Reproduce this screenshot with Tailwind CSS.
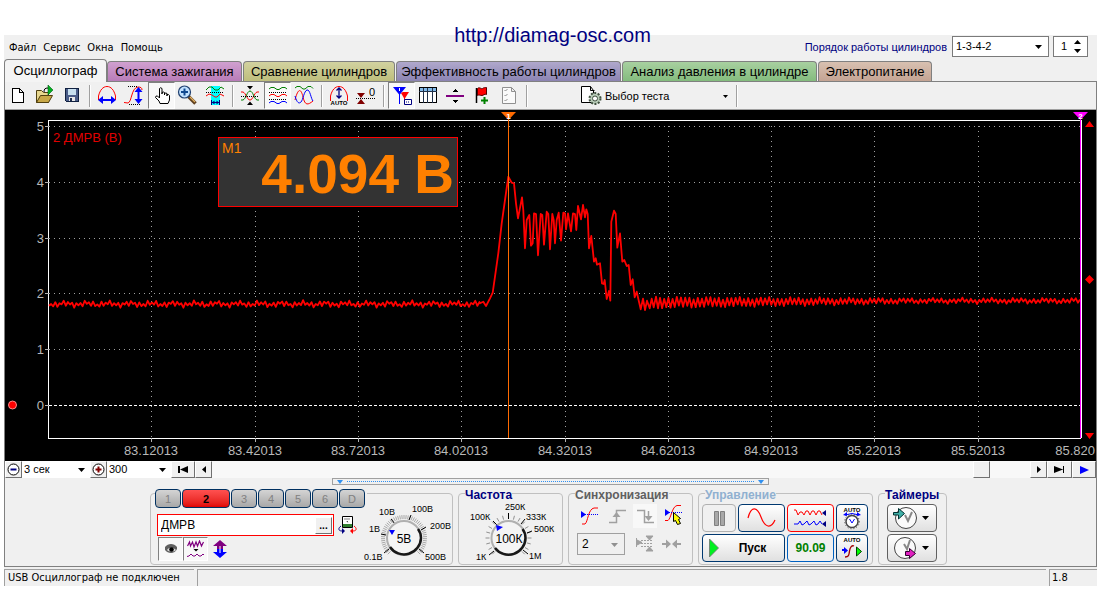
<!DOCTYPE html>
<html lang="ru">
<head>
<meta charset="utf-8">
<title>USB Осциллограф</title>
<meta name="viewport" content="width=device-width, initial-scale=1">
<script src="https://cdn.jsdelivr.net/npm/@tailwindcss/browser@4"></script>
</head>
<body class="bg-white font-['Liberation_Sans',Arial,sans-serif] text-[11px] leading-[14px] text-black">
<div class="relative pt-[35px] pr-3 pl-1">
  <a href="http://diamag-osc.com" class="absolute top-[23px] right-1 left-0 z-10 text-center text-[20px] leading-6 text-[#000080]">http://diamag-osc.com</a>

  <div class="bg-[#f0f0f0]">
    <!-- Menu bar and cylinder order -->
    <header class="flex h-6 items-start justify-between pr-[9px] pl-[5px]">
      <nav class="flex gap-[7px] pt-[6px] font-['DejaVu_Sans_Condensed','DejaVu_Sans',sans-serif] text-[11px]">
        <a href="#file">Файл</a><a href="#service">Сервис</a><a href="#windows">Окна</a><a href="#help">Помощь</a>
      </nav>
      <div class="flex items-center pt-px">
        <label for="order" class="pr-[5px] text-[#000080]">Порядок работы цилиндров</label>
        <span class="relative mr-1 block h-[21px] w-[97px] border border-[#7a7a7a] bg-white">
          <select id="order" class="block h-[18px] w-full appearance-none bg-transparent pl-[3px] outline-none"><option>1-3-4-2</option></select>
          <svg class="pointer-events-none absolute top-2 right-[6px]" width="7" height="4" viewBox="0 0 7 4"><path d="M0 0h7L3.500 4z"/></svg>
        </span>
        <span class="relative block h-[21px] w-[35px] border border-[#7a7a7a] bg-white">
          <input aria-label="Номер цилиндра" value="1" class="block h-[18px] w-5 bg-transparent pl-[7px] outline-none">
          <svg class="pointer-events-none absolute top-[3px] right-[6px]" width="7" height="13" viewBox="0 0 7 13"><path d="M0 4h7L3.500 0zM0 9h7L3.500 13z"/></svg>
        </span>
      </div>
    </header>

    <!-- Section tabs -->
    <div role="tablist" class="flex items-end text-[13px] leading-[19px]">
      <button role="tab" aria-selected="true" class="z-[1] -mb-px h-[23px] w-[103px] rounded-t border border-b-0 border-[#808080] bg-[#f4f4f4] pb-px">Осциллограф</button>
      <button role="tab" class="h-[20px] w-[135px] rounded-t border border-b-0 border-[#808080] bg-linear-to-b from-[#d0a0d0] to-[#b87cb8]">Система зажигания</button>
      <button role="tab" class="ml-px h-[20px] w-[152px] rounded-t border border-b-0 border-[#808080] bg-linear-to-b from-[#d2d2a0] to-[#bebe7c]">Сравнение цилиндров</button>
      <button role="tab" class="ml-px h-[20px] w-[225px] rounded-t border border-b-0 border-[#808080] bg-linear-to-b from-[#b0a8cc] to-[#8c84b2]">Эффективность работы цилиндров</button>
      <button role="tab" class="ml-px h-[20px] w-[195px] rounded-t border border-b-0 border-[#808080] bg-linear-to-b from-[#a8d0a0] to-[#84bc7e]">Анализ давления в цилиндре</button>
      <button role="tab" class="ml-px h-[20px] w-[114px] rounded-t border border-b-0 border-[#808080] bg-linear-to-b from-[#d8c0b0] to-[#c4a494]">Электропитание</button>
    </div>

    <main class="border border-[#808080]">
      <!-- Toolbar -->
      <div class="flex h-7 items-center border-b border-[#a0a0a0] [&_button]:flex [&_button]:h-[27px] [&_button]:w-[27px] [&_button]:items-center [&_button]:justify-center" id="toolbar">
        <button aria-label="Новый"><svg width="27" height="24" viewBox="0 0 27 24" shape-rendering="crispEdges"><path d="M7.500 4.500h7l4 4v10h-11zM14.500 4.500v4h4" fill="#fff" stroke="#000"/></svg></button>
        <button aria-label="Открыть"><svg width="27" height="24" viewBox="0 0 27 24"><path d="M4.500 18.500v-12h5l2 2h5v10z" fill="#e8d890" stroke="#504010"/><path d="M4.500 18.500l4-7h12l-4 7z" fill="#c8a848" stroke="#504010"/><path d="M12 8c0-3 1-4 4-4" fill="none" stroke="#000"/><path d="M16 1l5 5-5 5z" fill="#00b020" stroke="#006010" stroke-width=".6"/></svg></button>
        <button aria-label="Сохранить"><svg width="27" height="24" viewBox="0 0 27 24" shape-rendering="crispEdges"><path d="M6.500 4.500h13v13h-12l-1-1z" fill="#4a5c88" stroke="#102040"/><path d="M9 5h8v6h-8z" fill="#c8e0f0"/><path d="M10 13h6v4h-6z" fill="#e8e8e8"/><path d="M11 14h2v3h-2z" fill="#203050"/></svg></button>
        <i class="mx-[3px] h-[22px] w-px border-x border-l-[#a0a0a0] border-r-white"></i>
        <button aria-label="Период"><svg width="27" height="24" viewBox="0 0 27 24" fill="none"><path d="M4.500 16V12C6 6 9 2.500 13 2.500S20 6 21.500 12v4" stroke="#f00"/><path d="M6 16h14" stroke="#00f" stroke-width="2"/><path d="M4 16l5-4v8zM22 16l-5-4v8z" fill="#00f"/></svg></button>
        <button aria-label="Амплитуда"><svg width="27" height="24" viewBox="0 0 27 24" fill="none"><path d="M3 18.500l4 .5c4-1 3-15 10-16 3 0 4 1 4 3" stroke="#f00"/><path d="M7 2.500h10M8 20.500h12" stroke="#000" stroke-dasharray="1 1"/><path d="M17.500 5v13" stroke="#00f" stroke-width="2"/><path d="M17.500 3l4 5h-8zM17.500 20l4-5h-8z" fill="#00f"/></svg></button>
        <button aria-label="Рука" class="border border-t-[#808080] border-r-white border-b-white border-l-[#808080] bg-[#f8f8f8]"><svg class="shrink-0" width="27" height="24" viewBox="0 0 27 24"><path d="M11.500 14V4.500q1-1.500 2.500 0V10V8.500q1.500-1 2.500 0V11 9.500q1.500-1 2.500 0V12 10.500q1.500-.5 2.500 1V16l-1.500 3.500h-8L11 17l-3.500-3.500q0-2 2-1.500z" fill="#fff" stroke="#000"/></svg></button>
        <button aria-label="Лупа"><svg width="27" height="24" viewBox="0 0 27 24"><path d="M13.500 12.500l7 7" stroke="#604020" stroke-width="3.500"/><path d="M15 13l5 5" stroke="#e0b060" stroke-width="1.200"/><circle cx="9.500" cy="8" r="6" fill="#c0e0ff" stroke="#204070" stroke-width="1.200"/><path d="M9.500 4.500v7M6 8h7" stroke="#104890" stroke-width="2"/></svg></button>
        <button aria-label="Участок"><svg width="27" height="24" viewBox="0 0 27 24" fill="none"><path d="M9 2h9v19h-9z" fill="#0ff"/><path d="M4 6l3-3h3l3 3h3l3-3 3 2" stroke="#008000"/><path d="M4 8.500h18" stroke="#000" stroke-dasharray="1 1"/><path d="M4 12l3-2 3 1 3 2h2l3-3 4 2" stroke="#f00"/><path d="M9 18.500h9" stroke="#000080"/><path d="M9.500 16v5M17.500 16v5" stroke="#000080"/><path d="M10 18.500l2.500-2v4zM17 18.500l-2.500-2v4z" fill="#000080"/></svg></button>
        <i class="mx-[3px] h-[22px] w-px border-x border-l-[#a0a0a0] border-r-white"></i>
        <button aria-label="Сжать"><svg width="27" height="24" viewBox="0 0 27 24" fill="none"><path d="M4 8h2c3 1 4 8 7 8s4-7 7-8h2" stroke="#f00"/><path d="M4 16h2c3-1 4-9 7-9s4 8 7 9h2" stroke="#008000"/><path d="M4 12.500h18" stroke="#000" stroke-dasharray="1 1"/><path d="M10 2h6l-3 3.500zM10 21h6l-3-3.500z" fill="#000"/></svg></button>
        <button aria-label="Раздельно" class="border border-t-[#808080] border-r-white border-b-white border-l-[#808080] bg-[#f8f8f8]"><svg class="shrink-0" width="27" height="24" viewBox="0 0 27 24" fill="none"><path d="M5 5l2-1.500h3l3 2h2l3-2h3l2 1.500" stroke="#008000"/><path d="M5 8.500h18M5 15.500h18" stroke="#000" stroke-dasharray="1 1"/><path d="M5 12l2-1.500h3l3 2h2l3-2h3l2 1.500" stroke="#f00"/><path d="M5 19l2-1.500h3l3 2h2l3-2h3l2 1.500" stroke="#00f"/></svg></button>
        <button aria-label="Вместе"><svg width="27" height="24" viewBox="0 0 27 24" fill="none"><path d="M4 4l2-1.500h3l3 2.500h2l3-2.500h3l2 2" stroke="#008000"/><path d="M4 16c3-12 6-12 8-3s5 8 10 4" stroke="#f00"/><path d="M4 12c2 7 4 8 6 6s3-11 6-12 4 9 6 11" stroke="#00f"/></svg></button>
        <i class="mx-[3px] h-[22px] w-px border-x border-l-[#a0a0a0] border-r-white"></i>
        <button aria-label="Авто"><svg width="27" height="24" viewBox="0 0 27 24" fill="none"><path d="M4.500 17V12C6 6 9 2.500 13 2.500S20 6 21.500 12v5" stroke="#f00"/><path d="M13 4v10M10.500 6.500L13 4l2.500 2.500M10.500 11.500L13 14l2.500-2.500" stroke="#000080" stroke-width="1.300"/><text x="13" y="20.500" text-anchor="middle" font-size="6" font-weight="bold" fill="#000">AUTO</text></svg></button>
        <button aria-label="Ноль"><svg width="27" height="24" viewBox="0 0 27 24"><path d="M4 9h8l-4 5zM4 20h8l-4-5z" fill="#800000"/><path d="M3 14.500h19" stroke="#000" stroke-dasharray="1 1"/><text x="16" y="12" font-size="11">0</text></svg></button>
        <i class="mx-[3px] h-[22px] w-px border-x border-l-[#a0a0a0] border-r-white"></i>
        <button aria-label="Маркеры" class="border border-t-[#808080] border-r-white border-b-white border-l-[#808080] bg-[#f8f8f8]"><svg class="shrink-0" width="27" height="24" viewBox="0 0 27 24"><path d="M11.500 8v12" stroke="#00f"/><path d="M5 3h13l-6.500 8z" fill="#00f"/><path d="M16.500 13v6" stroke="#f00"/><path d="M13 9l2-1h6l-4.500 7z" fill="#f00"/><path d="M16.500 15.500h7v5h-7z" fill="#fff" stroke="#000080"/><path d="M18 18h4" stroke="#000080" stroke-dasharray="1 1"/><path d="M11.500 4v3" stroke="#fff"/></svg></button>
        <button aria-label="Таблица"><svg width="27" height="24" viewBox="0 0 27 24" shape-rendering="crispEdges"><path d="M4.500 3.500h17v15h-17z" fill="#fff" stroke="#000"/><path d="M5 4h16v3h-16z" fill="#80b8e8"/><path d="M4 7.500h18M8.500 4v15M12.500 4v15M17.500 4v15" stroke="#203048"/></svg></button>
        <button aria-label="Линия"><svg width="27" height="24" viewBox="0 0 27 24" shape-rendering="crispEdges"><path d="M4 11h18v2h-18z" fill="#800080"/><path d="M10 8h6l-3-3zM10 16h6l-3 3z"/></svg></button>
        <button aria-label="Добавить флаг"><svg width="27" height="24" viewBox="0 0 27 24"><path d="M7.500 4v15" stroke="#000" stroke-width="1.500"/><path d="M8.500 4.500c2-2 4 1 5 0s3-1 4-1v7c-2-1-3 1-4.500 1s-3-1-4.500 0z" fill="#f00" stroke="#500"/><path d="M15.500 13v7M12 16.500h7" stroke="#008000" stroke-width="2"/></svg></button>
        <button aria-label="Отчёт"><svg width="27" height="24" viewBox="0 0 27 24" fill="none" stroke="#909090"><path d="M6.500 3.500h9l4 4v12h-13zM15.500 3.500v4h4" fill="#fafafa"/><path d="M8.500 6l1 1 2-2M8.500 11l1 1 2-2M8.500 16l1 1 2-2"/></svg></button>
        <i class="mx-[3px] h-[22px] w-px border-x border-l-[#a0a0a0] border-r-white"></i>
        <label for="test" class="ml-[50px]"><svg width="22" height="24" viewBox="0 0 22 24"><path d="M.5 2.500h9l3 4v12h-12zM9.500 2.500v4h4" fill="#fff" stroke="#000"/><circle cx="14" cy="14.500" r="5.500" fill="#b8ccb8" stroke="#405040" stroke-width="2" stroke-dasharray="2 1.500"/><circle cx="14" cy="14.500" r="2.500" fill="#fff" stroke="#405040"/></svg></label>
        <span class="relative block w-[128px]">
          <select id="test" class="block w-full appearance-none bg-transparent pl-[2px] outline-none"><option>Выбор теста</option></select>
          <svg class="pointer-events-none absolute top-[6px] right-[3px]" width="5" height="3" viewBox="0 0 5 3"><path d="M0 0h5L2.500 3z"/></svg>
        </span>
        <i class="mr-[3px] ml-[5px] h-[22px] w-px border-x border-l-[#a0a0a0] border-r-white"></i>
      </div>

      <!-- Oscillogram -->
      <svg class="block h-auto w-full bg-black" viewBox="5 110 1091 351" font-size="13" fill="#b8b8b8">
        <g stroke="#a0a0a0" fill="none" stroke-dasharray="1 4" shape-rendering="crispEdges">
          <path d="M49 126.500H1081M49 182.500H1081M49 238.500H1081M49 293.500H1081M49 349.500H1081"/>
          <path d="M151.500 126V438M255.500 126V438M358.500 126V438M461.500 126V438M565.500 126V438M668.500 126V438M771.500 126V438M874.500 126V438M978.500 126V438"/>
        </g>
        <g stroke="#fff" fill="none" shape-rendering="crispEdges">
          <path d="M49 405.500H1081" stroke-dasharray="3 2"/>
          <path d="M48.500 438.500V120.500H1081M48.500 438.500H1081"/>
          <path d="M45 126.500h4M45 182.500h4M45 238.500h4M45 293.500h4M45 349.500h4M45 405.500h4M151.500 438v4M255.500 438v4M358.500 438v4M461.500 438v4M565.500 438v4M668.500 438v4M771.500 438v4M874.500 438v4M978.500 438v4" stroke="#b0b0b0"/>
        </g>
        <g text-anchor="end"><text x="44" y="131">5</text><text x="44" y="187">4</text><text x="44" y="243">3</text><text x="44" y="298">2</text><text x="44" y="354">1</text><text x="44" y="410">0</text></g>
        <g text-anchor="middle"><text x="151" y="455">83.12013</text><text x="255" y="455">83.42013</text><text x="358" y="455">83.72013</text><text x="461" y="455">84.02013</text><text x="565" y="455">84.32013</text><text x="668" y="455">84.62013</text><text x="771" y="455">84.92013</text><text x="874" y="455">85.22013</text><text x="978" y="455">85.52013</text></g>
        <text x="1095" y="455" text-anchor="end">85.820</text>
        <text x="53" y="142" fill="#e00000">2 ДМРВ (В)</text>
        <path id="trace" fill="none" stroke="#f00" stroke-width="1.800" stroke-linejoin="round"/>
        <path d="M508.500 118V438" stroke="#ff6a00" shape-rendering="crispEdges"/>
        <path d="M501 112h15l-7.500 8z" fill="#ff6a00"/><text x="508.500" y="119" text-anchor="middle" font-size="8" font-weight="bold" fill="#fff">1</text>
        <path d="M1080.500 112V438" stroke="#f0f" stroke-width="1" shape-rendering="crispEdges"/><path d="M1081.500 120V438" stroke="#fff" shape-rendering="crispEdges"/>
        <path d="M1073 112h15l-7.500 8z" fill="#f0f"/><text x="1080.500" y="119" text-anchor="middle" font-size="8" font-weight="bold" fill="#fff">2</text>
        <path d="M1085 127h9l-4.500-6zM1085 433h9l-4.500 6zM1085 279.500l4.500-4.500 4.500 4.500-4.500 4.500z" fill="#f00"/>
        <circle cx="12.500" cy="405" r="4" fill="#f00" stroke="#f88"/>
        <rect x="218.500" y="137.500" width="239" height="69" fill="#333" stroke="#f00"/>
        <text x="222" y="153" font-size="14" fill="#ff8000">M1</text>
        <text x="454" y="193" text-anchor="end" font-size="55" font-weight="bold" fill="#ff8000">4.094 В</text>
      </svg>

      <!-- Time navigation -->
      <div class="flex h-[17px] bg-[#f8f8f8] [&>button]:flex [&>button]:items-center [&>button]:justify-center [&>button]:border [&>button]:border-t-white [&>button]:border-r-[#707070] [&>button]:border-b-[#707070] [&>button]:border-l-white [&>button]:bg-[#f0f0f0]">
        <button aria-label="Уменьшить" class="w-[17px]"><svg width="13" height="13" viewBox="0 0 13 13"><circle cx="6.500" cy="6.500" r="5.500" fill="#fff" stroke="#000"/><path d="M3.500 6.500h6" stroke="#000080" stroke-width="2"/></svg></button>
        <span class="relative block w-[68px] bg-white"><select aria-label="Развёртка" class="block h-[15px] w-full appearance-none bg-transparent pl-[2px] outline-none"><option>3 сек</option></select><svg class="pointer-events-none absolute top-[7px] right-[5px]" width="7" height="4" viewBox="0 0 7 4"><path d="M0 0h7L3.500 4z"/></svg></span>
        <button aria-label="Увеличить" class="w-[17px]"><svg width="13" height="13" viewBox="0 0 13 13"><circle cx="6.500" cy="6.500" r="5.500" fill="#fff" stroke="#000"/><path d="M3.500 6.500h6M6.500 3.500v6" stroke="#800000" stroke-width="2"/></svg></button>
        <span class="relative block w-[64px] bg-white"><select aria-label="Масштаб" class="block h-[15px] w-full appearance-none bg-transparent pl-[2px] outline-none"><option>300</option></select><svg class="pointer-events-none absolute top-[7px] right-[5px]" width="7" height="4" viewBox="0 0 7 4"><path d="M0 0h7L3.500 4z"/></svg></span>
        <button aria-label="В начало" class="w-6"><svg width="11" height="7" viewBox="0 0 11 7"><path d="M0 0h2v7H0zM10 0v7L2 3.500z"/></svg></button>
        <button aria-label="Назад" class="w-[17px]"><svg width="4" height="7" viewBox="0 0 4 7"><path d="M4 0v7L0 3.500z"/></svg></button>
        <div class="flex flex-1 justify-end pr-10"><button aria-label="Полоса прокрутки" class="w-[17px] border border-t-white border-r-[#707070] border-b-[#707070] border-l-white bg-[#f0f0f0]"></button></div>
        <button aria-label="Вперёд" class="w-[17px]"><svg width="4" height="7" viewBox="0 0 4 7"><path d="M0 0v7l4-3.500z"/></svg></button>
        <button aria-label="В конец" class="w-[25px]"><svg width="11" height="7" viewBox="0 0 11 7"><path d="M9 0h1v7H9zM0 0v7l9-3.500z"/></svg></button>
        <button aria-label="Слежение" class="w-6"><svg width="9" height="8" viewBox="0 0 9 8"><path d="M0 0v8l9-4z" fill="#00f"/></svg></button>
      </div>

      <!-- Panel splitter -->
      <div class="mx-auto flex h-[7px] w-2/5 items-center justify-between border border-[#a0a0a0] px-1">
        <svg width="6" height="4" viewBox="0 0 6 4"><path d="M0 0h6L3 4z" fill="#3090f0"/></svg>
        <span class="mx-1 h-px flex-1 border-t border-dotted border-[#3090f0]"></span>
        <svg width="6" height="4" viewBox="0 0 6 4"><path d="M0 0h6L3 4z" fill="#3090f0"/></svg>
      </div>

      <!-- Control panels -->
      <div class="flex justify-center gap-[5px] pt-2 pr-1 pb-px">
        <section aria-label="Канал" class="flex h-[72px] w-[303px] rounded border border-[#c0c0c0] pl-1">
          <div class="flex w-[208px] flex-col">
            <div class="-mt-[5px] flex h-[19px] w-[212px] gap-px bg-[#f0f0f0] [&>button]:w-[26px] [&>button]:rounded-sm [&>button]:border [&>button]:border-[#003060] [&>button]:bg-linear-to-b [&>button]:from-[#d4d4d4] [&>button]:to-[#a8a8a8] [&>button]:text-[#808080]">
              <button>1</button><span class="flex w-12"><button aria-pressed="true" class="flex-1 rounded-sm border border-[#003060] bg-linear-to-b from-[#ff5050] to-[#e00000] font-bold">2</button></span><button>3</button><button>4</button><button>5</button><button>6</button><button>D</button>
            </div>
            <div class="mt-[6px] ml-[2px] flex items-center gap-1">
              <span class="flex h-[22px] w-[177px] items-center border border-[#f00] bg-white pr-px">
                <input aria-label="Имя канала" value="ДМРВ" class="w-0 flex-1 bg-transparent pl-[3px] text-[12px] outline-none">
                <button aria-label="Выбрать датчик" class="h-[17px] w-[17px] border border-t-white border-r-[#707070] border-b-[#707070] border-l-white bg-[#f0f0f0] text-[10px] leading-[9px] font-bold">...</button>
              </span>
              <button aria-label="Сменить прибор"><svg width="19" height="19" viewBox="0 0 19 19"><path d="M4.500.5h10v11h-10z" fill="#fff" stroke="#000"/><path d="M5 8h9v3H5z" fill="#308030"/><path d="M6.500 3h6M9 5l1 2" stroke="#000" stroke-dasharray="1 1"/><path d="M3 10c-3 2-3 5 1 5" stroke="#000080" fill="none"/><path d="M4 12l3 3-3 3z" fill="#000080"/><path d="M16 10c3 2 3 5-1 5" stroke="#f00" fill="none"/><path d="M15 12l-3 3 3 3z" fill="#f00"/></svg></button>
            </div>
            <div class="mt-px ml-[3px] flex items-center">
              <button aria-label="Показать канал" class="flex h-6 w-[25px] items-center justify-center border border-t-[#808080] border-r-white border-b-white border-l-[#808080] bg-[#f8f8f8]"><svg width="14" height="12" viewBox="0 0 14 12"><path d="M1 4c3-4 9-4 12 0v2c-2 5-9 5-12 1z" fill="#606060"/><path d="M3 7c2-3 6-3 9 0-2 2-7 2-9 0z" fill="#ddd"/><circle cx="7.500" cy="6.500" r="2.300"/></svg></button>
              <button aria-label="Фильтр" class="flex h-6 w-[25px] items-center justify-center border border-t-[#808080] border-r-white border-b-white border-l-[#808080] bg-[#f8f8f8]"><svg width="18" height="18" viewBox="0 0 18 18" fill="none" stroke="#800080"><path d="M.5 6l2-4 1 4 2-4 1.500 5 2-5 1.500 4 2-5 2 5 2-4" stroke-width="1.200"/><path d="M0 16.500l2-.5 2-2 2 2h2l2-2 2 2h2l2-2 1 1"/><path d="M6.500 9h5L9 11.500z" fill="#000" stroke="none"/></svg></button>
              <button aria-label="Сдвиг" class="ml-[5px]"><svg width="14" height="18" viewBox="0 0 14 18"><path d="M7 0l7 6h-4v3H4V6H0z" fill="#800080"/><path d="M7 18l7-6h-4V9H4v3H0z" fill="#00f"/><path d="M7 6v7" stroke="#fff"/></svg></button>
            </div>
          </div>
          <svg role="img" aria-label="Диапазон 5В" class="mt-[6px] shrink-0" width="92" height="64" viewBox="363 500 92 64" font-size="9">
            <g id="dialV" stroke="#a8a8a8"></g>
            <path d="M389 549l-5 4M386 535l-5-1M395 524l-4-5M409 520l2-5M421 530l5-3M419 549l5 4" stroke="#000"/>
            <circle cx="404" cy="538" r="17" fill="#f4f4f4" stroke="#b0b0b0" stroke-width="2"/><path d="M390 547a17 17 0 0 0 31-9q0-5-3-9" fill="none" stroke="#181818" stroke-width="2.500"/>
            <path d="M389 530h6l-3 5z" fill="#00f"/><text x="404" y="543" text-anchor="middle" font-size="12">5В</text>
            <text x="364" y="560">0.1В</text><text x="369" y="532">1В</text><text x="379" y="515">10В</text><text x="412" y="512">100В</text><text x="430" y="529">200В</text><text x="425" y="560">500В</text>
          </svg>
        </section>

        <section aria-labelledby="freq" class="h-[72px] w-[105px] rounded border border-[#c0c0c0]">
          <h2 id="freq" class="-mt-[6px] ml-[6px] w-fit bg-[#f0f0f0] text-[12px] leading-[14px] font-bold text-[#000080]">Частота</h2>
          <svg role="img" aria-label="Частота 100К" class="mx-auto -mt-px" width="92" height="63" viewBox="465 501 92 63" font-size="9">
            <g id="dialF" stroke="#909090"></g>
            <path d="M494 551l-5 4M497 525l-4-4M508.500 519v-6M521 524l4-5M527 533l5-2M523 550l5 4" stroke="#000"/>
            <circle cx="508.500" cy="538" r="17" fill="#f4f4f4" stroke="#b0b0b0" stroke-width="2"/><path d="M495 548a17 17 0 0 0 30.500-10q0-5-3-9" fill="none" stroke="#181818" stroke-width="2.500"/>
            <path d="M496 525l7 2-6 4z" fill="#00f"/><text x="509" y="543" text-anchor="middle" font-size="12">100К</text>
            <text x="476" y="560">1К</text><text x="470" y="520">100К</text><text x="505" y="510">250К</text><text x="526" y="520">333К</text><text x="534" y="532">500К</text><text x="529" y="559">1М</text>
          </svg>
        </section>

        <section aria-labelledby="sync" class="h-[72px] w-[125px] rounded border border-[#c0c0c0]">
          <h2 id="sync" class="-mt-[6px] ml-[6px] w-fit bg-[#f0f0f0] text-[12px] leading-[14px] font-bold text-[#606060]">Синхронизация</h2>
          <div class="mt-[2px] ml-2 flex gap-1">
            <button aria-label="Уровень"><svg width="24" height="24" viewBox="0 0 24 24" fill="none"><path d="M5 20h3c3-2 3-15 9-16h4" stroke="#f00"/><path d="M4 10.500h18" stroke="#00f" stroke-dasharray="1 1"/><path d="M4 7v7l5-3.500z" fill="#00f"/></svg></button>
            <button aria-label="Фронт" disabled><svg width="24" height="24" viewBox="0 0 24 24" fill="none"><path d="M4 18.500h7.500v-12H21" stroke="#a0a0a0" stroke-width="1.500"/><path d="M11.500 8l4 5h-8z" fill="#a0a0a0"/></svg></button>
            <button aria-label="Спад" disabled class="bg-[#f8f8f8]"><svg width="24" height="24" viewBox="0 0 24 24" fill="none"><path d="M4 6.500h7.500v12H21M15.500 7v8" stroke="#a0a0a0" stroke-width="1.500"/><path d="M15.500 17l4-5h-8z" fill="#a0a0a0"/></svg></button>
            <button aria-label="Установить уровень"><svg width="24" height="24" viewBox="0 0 24 24" fill="none"><path d="M4 16.500h3c3-2 4-14 9-15h4" stroke="#f00"/><path d="M4 8.500h18" stroke="#00f" stroke-dasharray="1 1"/><path d="M4 5v7l5-3.500z" fill="#00f"/><path d="M12.500 8.500l7 6-2 1 2 4-3 1-2-4-2 1z" fill="#ff0" stroke="#000"/></svg></button>
          </div>
          <div class="mt-[5px] ml-2 flex gap-[10px]">
            <span class="relative block h-[22px] w-12 border border-[#a0a0a0]"><select aria-label="Канал синхронизации" disabled class="block h-5 w-full appearance-none bg-transparent pl-1 text-[12px] text-black opacity-100 outline-none"><option>2</option></select><svg class="pointer-events-none absolute top-[9px] right-[6px]" width="7" height="4" viewBox="0 0 7 4"><path d="M0 0h7L3.500 4z" fill="#909090"/></svg></span>
            <button aria-label="Окно" disabled><svg width="20" height="18" viewBox="0 0 20 18" fill="none" stroke="#a0a0a0"><path d="M1.500 3v9M2 5l5 2.500L2 10z" fill="#a0a0a0"/><path d="M6 5.500h12M6 11.500h12M6 8.500h12" stroke-dasharray="2 1"/><path d="M11 1h7l-3.500 4zM11 16h7l-3.500-4z" fill="#a0a0a0"/></svg></button>
            <button aria-label="К центру" disabled class="-ml-[3px]"><svg width="19" height="10" viewBox="0 0 19 10" fill="#a0a0a0"><path d="M0 4h4V0.500l5 4.500-5 4.500V6H0zM19 4h-4V0.500l-5 4.500 5 4.500V6h4z"/></svg></button>
          </div>
        </section>

        <section aria-labelledby="ctl" class="h-[72px] w-[175px] rounded border border-[#c0c0c0]">
          <h2 id="ctl" class="-mt-[6px] ml-[6px] w-fit bg-[#f0f0f0] text-[12px] leading-[14px] font-bold text-[#90b0d0]">Управление</h2>
          <div class="mt-[2px] ml-[3px] grid grid-cols-[34px_47px_47px_32px] grid-rows-[28px_28px] gap-x-[2px] gap-y-[2px] [&>button]:flex [&>button]:items-center [&>button]:justify-center [&>button]:rounded-sm [&>button]:border">
            <button aria-label="Пауза" disabled class="border-[#b0b0b0]"><svg width="11" height="15" viewBox="0 0 11 15"><path d="M.5.5h4v14h-4zM6.500.5h4v14h-4z" fill="#a8a8a8" stroke="#808080"/></svg></button>
            <button aria-label="Синус" class="border-[#003870] bg-linear-to-b from-white to-[#e0e0e0]"><svg width="29" height="20" viewBox="0 0 29 20"><path d="M1 10C4 -2 10 -2 14 9S24 21 28 12" fill="none" stroke="#f00" stroke-width="1.200"/></svg></button>
            <button aria-label="Непрерывно" class="border-[#f00] bg-linear-to-b from-white to-[#e0e0e0]"><svg width="33" height="20" viewBox="0 0 33 20" fill="none"><path d="M0 2h2l2 5 2-3h2l2 3 2-4h2l2 4 2-4h2l2 4 2-4h2l2 4" stroke="#f00"/><path d="M0 16h4l2-3 2 4 2-1 3-3 2 4 2-1 3-3 2 4 2-1 2-3 2 3" stroke="#00f"/><path d="M32 2v6l-4-3zM32 13v6l-4-3z" fill="#000080"/></svg></button>
            <button aria-label="Авто диапазон" class="border-[#003870] bg-linear-to-b from-white to-[#e0e0e0]"><svg width="20" height="24" viewBox="0 0 20 24"><text x="10" y="6" text-anchor="middle" font-size="6" font-weight="bold">AUTO</text><circle cx="10" cy="15.500" r="6" fill="#fff" stroke="#444" stroke-width="1.500"/><circle cx="10" cy="15.500" r="7.300" fill="none" stroke="#444" stroke-dasharray="1 2"/><path d="M7.500 13l2.500 4 2.500-4M3 9q7-3 14 0" fill="none" stroke="#00f"/><path d="M1 9l4-3v4zM19 9l-4-3v4z" fill="#00f"/></svg></button>
            <button class="col-span-2 gap-5 border-[#003870] bg-linear-to-b from-white to-[#e0e0e0] pr-3 text-[12px] font-bold"><svg width="10" height="18" viewBox="0 0 10 18"><path d="M.5 0v18L9.500 9z" fill="#00f020" stroke="#707070" stroke-width=".8"/></svg>Пуск</button>
            <button class="border-[#0060c0] bg-[#f0f0f0] text-[12px] font-bold text-[#008000]">90.09</button>
            <button aria-label="Авто запуск" class="border-[#003870] bg-linear-to-b from-white to-[#e0e0e0]"><svg width="20" height="24" viewBox="0 0 20 24"><text x="10" y="6" text-anchor="middle" font-size="6" font-weight="bold">AUTO</text><path d="M3 21c4 0 4-2 4.500-6S10 9 12 10" fill="none" stroke="#a00000" stroke-width="1.300"/><path d="M0 14h3" stroke="#00f" stroke-width="2"/><path d="M2 11v7l4-3.500z" fill="#00f"/><path d="M14.500 11v9l5-4.500z" fill="#0f0" stroke="#004000"/></svg></button>
          </div>
        </section>

        <section aria-labelledby="timers" class="h-[72px] w-[69px] rounded border border-[#c0c0c0]">
          <h2 id="timers" class="-mt-[6px] ml-[6px] w-fit bg-[#f0f0f0] text-[12px] leading-[14px] font-bold text-[#000080]">Таймеры</h2>
          <div class="mt-[2px] ml-2 grid w-[50px] grid-rows-[28px_28px] gap-[2px] [&>button]:flex [&>button]:items-center [&>button]:gap-[5px] [&>button]:rounded-sm [&>button]:border [&>button]:border-[#606060] [&>button]:bg-linear-to-b [&>button]:from-white [&>button]:to-[#e0e0e0] [&>button]:pl-[5px]">
            <button aria-label="Таймер запуска"><svg width="24" height="24" viewBox="0 0 24 24"><circle cx="13" cy="12" r="10.500" fill="#fafafa" stroke="#444"/><path d="M12 9l3 6 4-9" stroke="#888" stroke-width="2" fill="none"/><path d="M.5 6.500h5v-4l6 5-6 5.500v-4h-5z" fill="#40b0a8" stroke="#003030"/></svg><svg width="7" height="4" viewBox="0 0 7 4"><path d="M0 0h7L3.500 4z"/></svg></button>
            <button aria-label="Таймер остановки"><svg width="24" height="24" viewBox="0 0 24 24"><circle cx="12" cy="12" r="10.500" fill="#fafafa" stroke="#444"/><path d="M11 8l3 5 3-9" stroke="#888" stroke-width="2" fill="none"/><path d="M12.500 15.500h4v-3l6 5-6 5v-3h-4z" fill="#e020c0" stroke="#300030"/></svg><svg width="7" height="4" viewBox="0 0 7 4"><path d="M0 0h7L3.500 4z"/></svg></button>
          </div>
        </section>
      </div>
    </main>

    <!-- Status bar -->
    <footer class="flex h-[19px] gap-[3px] pt-[2px] font-['DejaVu_Sans_Condensed','DejaVu_Sans',sans-serif] text-[11px]">
      <p class="w-[190px] border-t border-l border-[#a0a0a0] pt-px pl-[3px]">USB Осциллограф не подключен</p>
      <p class="flex-1 border-t border-l border-[#a0a0a0]"></p>
      <p class="w-12 border-t border-l border-[#a0a0a0] pt-px pl-[2px]">1.8</p>
    </footer>
  </div>
</div>

<script>
  // Signal trace: idle ripple, acceleration burst, idle ripple
  const pts = [];
  for (let x = 49, i = 0; x < 480; x += 2.1, i++) pts.push([x, 304 + (i % 2 ? -1.7 : 1.7) + 1.1 * Math.sin(i * 1.7) + Math.sin(i * .61)]);
  const burst = [0,580,10,575,18,588,30,565,38,548,45,500,55,430,65,340,75,270,85,200,95,218,102,220,108,280,114,325,126,262,130,300,135,415,140,330,148,315,153,407,158,400,162,310,168,312,174,436,182,312,187,315,192,404,200,305,205,312,210,418,217,312,221,330,225,400,230,330,236,308,243,392,250,308,255,310,258,358,264,310,273,364,279,310,285,312,289,360,294,288,303,328,309,285,315,322,319,298,323,312,327,415,334,378,342,455,347,445,351,464,360,460,366,520,371,522,374,510,380,567,387,543,391,572,394,335,402,302,407,312,412,413,420,370,427,455,433,450,440,468,446,465,452,525,458,508,464,562,470,545,482,598,489,566,495,600,501,572,509,595,515,566,521,592,528,560,534,595];
  for (let i = 0; i < burst.length; i += 2) pts.push([480 + burst[i] / 3, 110 + burst[i + 1] / 3]);
  for (let x = 660, i = 0; x < 1081; x += 2.1, i++) {
    const t = Math.min(1, (x - 660) / 260), a = 4.7 - 3 * t;
    pts.push([x, 302.5 - 1.7 * t + (i % 2 ? a : -a) + .8 * Math.sin(i * 1.3) + .7 * Math.sin(i * .47)]);
  }
  document.getElementById('trace').setAttribute('d', 'M' + pts.map(p => p[0].toFixed(1) + ' ' + p[1].toFixed(1)).join('L'));

  // Dial graduations
  function ticks(id, cx, cy, r1, r2, n) {
    let d = '';
    for (let i = 0; i <= n; i++) {
      const a = (135 + 270 * i / n) * Math.PI / 180;
      d += `M${cx + r1 * Math.cos(a)} ${cy + r1 * Math.sin(a)}L${cx + r2 * Math.cos(a)} ${cy + r2 * Math.sin(a)}`;
    }
    document.getElementById(id).innerHTML = `<path d="${d}"/>`;
  }
  ticks('dialV', 404, 538, 19, 23, 50);
  ticks('dialF', 508.5, 538, 19, 23, 18);
</script>
</body>
</html>
